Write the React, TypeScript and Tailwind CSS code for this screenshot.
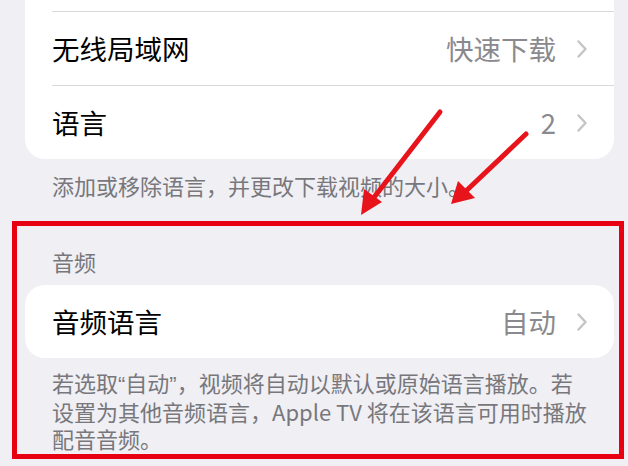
import { ReactNode } from "react";

function Chevron() {
    return (
        <svg width="12" height="20" viewBox="0 0 12 20" className="ml-[20px]">
            <path d="M2.5 2.5 L9.5 10 L2.5 17.5" fill="none" stroke="#c4c4c8" strokeWidth="2.4" strokeLinecap="round" strokeLinejoin="round" />
        </svg>
    );
}

interface RowProps {
    label: string,
    value: string,
    height: string,
    children?: ReactNode
}

function Row({ label, value, height }: RowProps) {
    return (
        <div className={`flex items-center justify-between pr-[26px] ${height}`}>
            <span className="text-[27.5px] text-black">{label}</span>
            <div className="flex items-center">
                <span className="text-[27.5px] text-[#8a8a8e]">{value}</span>
                <Chevron />
            </div>
        </div>
    );
}

function Arrows() {
    return (
        <svg className="absolute left-0 top-0 pointer-events-none" width="628" height="466" viewBox="0 0 628 466">
            <g stroke="#e8141b" strokeWidth="5" strokeLinecap="round" fill="none">
                <line x1="440" y1="112" x2="372" y2="200" />
                <line x1="526" y1="134" x2="466" y2="191" />
            </g>
            <g fill="#e8141b">
                <polygon points="361,215 364,189 382,202" />
                <polygon points="451,204 458,181 475,198" />
            </g>
        </svg>
    );
}

const q = "font-['Liberation_Sans',sans-serif]";

export default function App() {
    return (
        <div className="relative w-[628px] h-[466px] overflow-hidden bg-[#efeff4] font-['Noto_Sans_CJK_SC','Noto_Sans',sans-serif]">
            <div className="mx-[25px] mr-[14px] bg-white rounded-b-[20px] pl-[27px]">
                <div className="h-[11px]" />
                <div className="border-t border-[#d9d9dc]">
                    <Row label="无线局域网" value="快速下载" height="h-[73px]" />
                </div>
                <div className="border-t border-[#d9d9dc]">
                    <Row label="语言" value="2" height="h-[73px]" />
                </div>
            </div>
            <p className="pl-[52px] pt-[12px] text-[22px] leading-[28px] text-[#77777c]">
                添加或移除语言，并更改下载视频的大小。
            </p>

            <div className="mt-[22px] ml-[12px] mr-[4px] h-[238px] border-[5px] border-[#e60012] pl-[8px] pr-[5px]">
                <div className="pt-[21px] pl-[27px] text-[22px] leading-[28px] text-[#77777c]">音频</div>
                <div className="mt-[10px] bg-white rounded-[20px] pl-[27px]">
                    <Row label="音频语言" value="自动" height="h-[73px]" />
                </div>
                <p className="mt-[11px] pl-[27px] pr-[20px] text-[22px] leading-[27px] text-[#77777c]">
                    若选取<span className={q}>“</span>自动<span className={q}>”</span>，视频将自动以默认或原始语言播放。若设置为其他音频语言，Apple TV 将在该语言可用时播放<br />配音音频。
                </p>
            </div>

            <Arrows />
        </div>
    );
}
